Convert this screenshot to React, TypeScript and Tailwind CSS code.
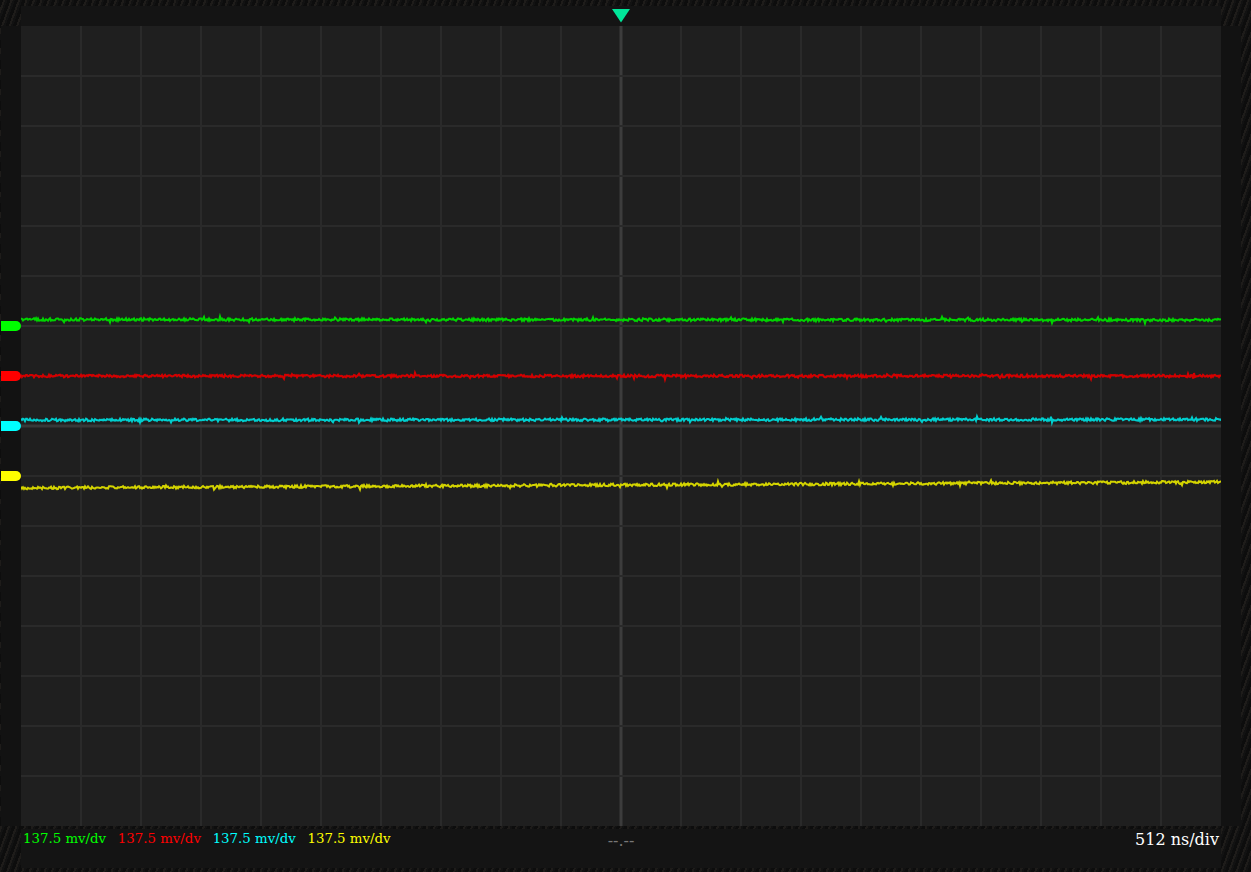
const hatch =
  "bg-[#121212] bg-[repeating-linear-gradient(110deg,#0d0d0d_0px,#0d0d0d_3px,#1e1c1a_3px,#1e1c1a_5px,#121212_5px,#121212_7px)]";

const channels = [
  { name: "ch1", marker: "bg-[#00ff00]", text: "text-[#00ff00]", stroke: "#00d400", start: 293.5, end: 294, seed: 11 },
  { name: "ch2", marker: "bg-[#ff0000]", text: "text-[#ff0000]", stroke: "#d40000", start: 350, end: 350, seed: 29 },
  { name: "ch3", marker: "bg-[#00ffff]", text: "text-[#00ffff]", stroke: "#00cfcf", start: 394, end: 393.5, seed: 47 },
  { name: "ch4", marker: "bg-[#ffff00]", text: "text-[#ffff00]", stroke: "#d4d400", start: 462, end: 456, seed: 83 },
];

// small seeded generator so the noise is the same on every load
function noisyTrace(start: number, end: number, seed: number) {
  let s = seed;
  const rand = () => {
    s = (s * 16807) % 2147483647;
    return s / 2147483647;
  };
  const points: string[] = [];
  for (let x = 0; x <= 1200; x += 1) {
    const base = start + ((end - start) * x) / 1200;
    let n = (rand() - 0.5) * 2.6;
    if (rand() > 0.97) n += (rand() - 0.5) * 5;
    points.push(`${x},${(base + n).toFixed(1)}`);
  }
  return points.join(" ");
}

const vLines = Array.from({ length: 19 }, (_, i) => (i + 1) * 60);
const hLines = Array.from({ length: 15 }, (_, i) => (i + 1) * 50);

function Scope() {
  return (
    <svg width="1200" height="800" className="block bg-[#1f1f1f]">
      {vLines.map((x) => (
        <line key={x} x1={x} x2={x} y1={0} y2={800} stroke={x === 600 ? "#3c3c3c" : "#2a2a2a"} strokeWidth={x === 600 ? 3 : 2} />
      ))}
      {hLines.map((y) => (
        <line key={y} x1={0} x2={1200} y1={y} y2={y} stroke={y === 400 ? "#383838" : y === 300 ? "#2e2e2e" : "#2a2a2a"} strokeWidth={y === 400 ? 3 : 2} />
      ))}
      {channels.map((c) => (
        <polyline key={c.name} points={noisyTrace(c.start, c.end, c.seed)} fill="none" stroke={c.stroke} strokeWidth={2} />
      ))}
    </svg>
  );
}

export default function App() {
  return (
    <div
      className={`grid h-[872px] w-[1251px] grid-cols-[1px_20px_1200px_20px_10px] grid-rows-[6px_20px_800px_42px_4px] overflow-hidden ${hatch} font-['DejaVu_Serif',serif]`}
    >
      <div className="col-start-3 row-start-2 flex justify-center bg-[#141414]">
        <svg width="18" height="14" className="mt-[3px]">
          <polygon points="0,0 18,0 9,13.5" fill="#00e699" />
        </svg>
      </div>

      <div className="relative col-start-2 row-start-3 bg-[#121212]">
        {channels.map((c, i) => (
          <div
            key={c.name}
            className={`absolute left-0 h-[10px] w-5 rounded-r-[5px] ${c.marker} ${
              ["top-[295px]", "top-[345px]", "top-[395px]", "top-[445px]"][i]
            }`}
          />
        ))}
      </div>

      <div className="col-start-3 row-start-3">
        <Scope />
      </div>

      <div className="col-start-4 row-start-3 bg-[#121212]" />

      <div className="col-start-3 row-start-4 flex flex-col bg-[#141414]">
        <div className={`h-[3px] ${hatch}`} />
        <div className="grid grid-cols-[1fr_auto_1fr] items-start pt-[1px]">
          <div className="flex gap-[11.7px] pl-[2px] text-[13.33px] leading-[18px]">
            {channels.map((c) => (
              <span key={c.name} className={c.text}>
                137.5 mv/dv
              </span>
            ))}
          </div>
          <span className="pt-[1px] text-[16px] leading-[20px] text-[#777777]">--.--</span>
          <span className="pr-[2px] text-right text-[16px] leading-[20px] text-white">512 ns/div</span>
        </div>
      </div>
    </div>
  );
}
